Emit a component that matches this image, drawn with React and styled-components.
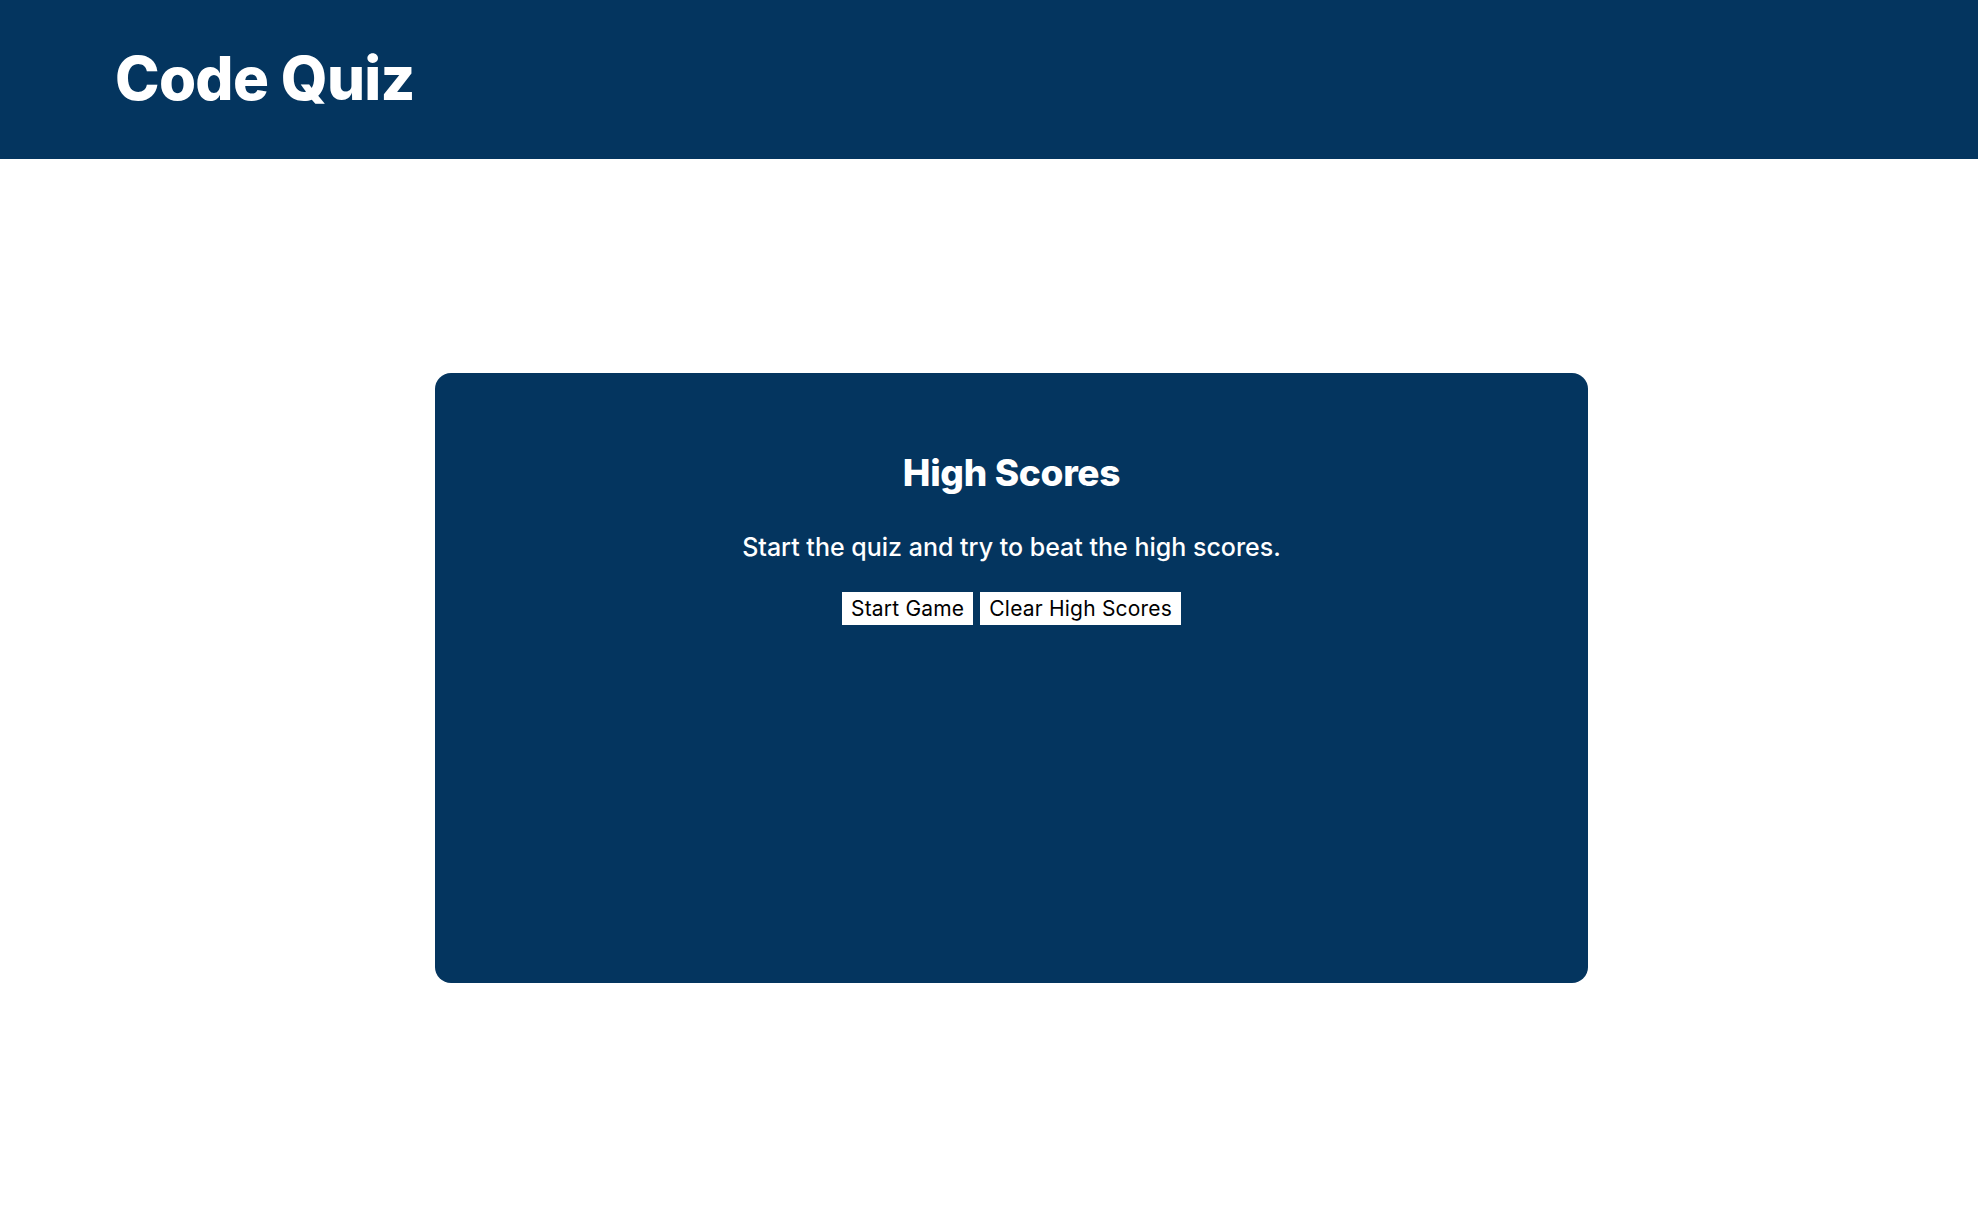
import React from "react";
import styled, { createGlobalStyle } from "styled-components";

const Global = createGlobalStyle`
  html, body { margin: 0; padding: 0; background: #ffffff; }
  body { font-family: Inter, "Open Sans", "Liberation Sans", sans-serif; }
`;

const NAVY = "#04355f";

const Header = styled.header`
  height: 159px;
  background: ${NAVY};
  display: flex;
  align-items: center;
  padding-left: 115px;
  padding-bottom: 4px;
  box-sizing: border-box;
`;

const Title = styled.h1`
  margin: 0;
  color: #ffffff;
  font-size: 60px;
  font-weight: 800;
  letter-spacing: -0.7px;
  line-height: 1;
`;

const Main = styled.main`
  padding-top: 214px;
  padding-left: 435px;
`;

const Card = styled.section`
  width: 1153px;
  height: 610px;
  background: ${NAVY};
  border-radius: 16px;
  display: flex;
  flex-direction: column;
  align-items: center;
  padding-top: 78px;
  box-sizing: border-box;
  color: #ffffff;
`;

const Heading = styled.h2`
  margin: 0;
  font-size: 37px;
  font-weight: 800;
  line-height: 44px;
  letter-spacing: -0.3px;
`;

const Text = styled.p`
  margin: 36px 0 0;
  font-size: 25px;
  font-weight: 500;
  line-height: 32px;
`;

const Buttons = styled.div`
  display: flex;
  gap: 7px;
  margin-top: 29px;
`;

const Button = styled.button`
  background: #ffffff;
  color: #000000;
  border: none;
  border-radius: 0;
  height: 33px;
  padding: 0 9px;
  font-family: inherit;
  font-size: 21px;
  font-weight: 400;
  letter-spacing: 0.2px;
  cursor: pointer;
`;

export default function App() {
  return (
    <>
      <Global />
      <Header>
        <Title>Code Quiz</Title>
      </Header>
      <Main>
        <Card>
          <Heading>High Scores</Heading>
          <Text>Start the quiz and try to beat the high scores.</Text>
          <Buttons>
            <Button>Start Game</Button>
            <Button>Clear High Scores</Button>
          </Buttons>
        </Card>
      </Main>
    </>
  );
}
